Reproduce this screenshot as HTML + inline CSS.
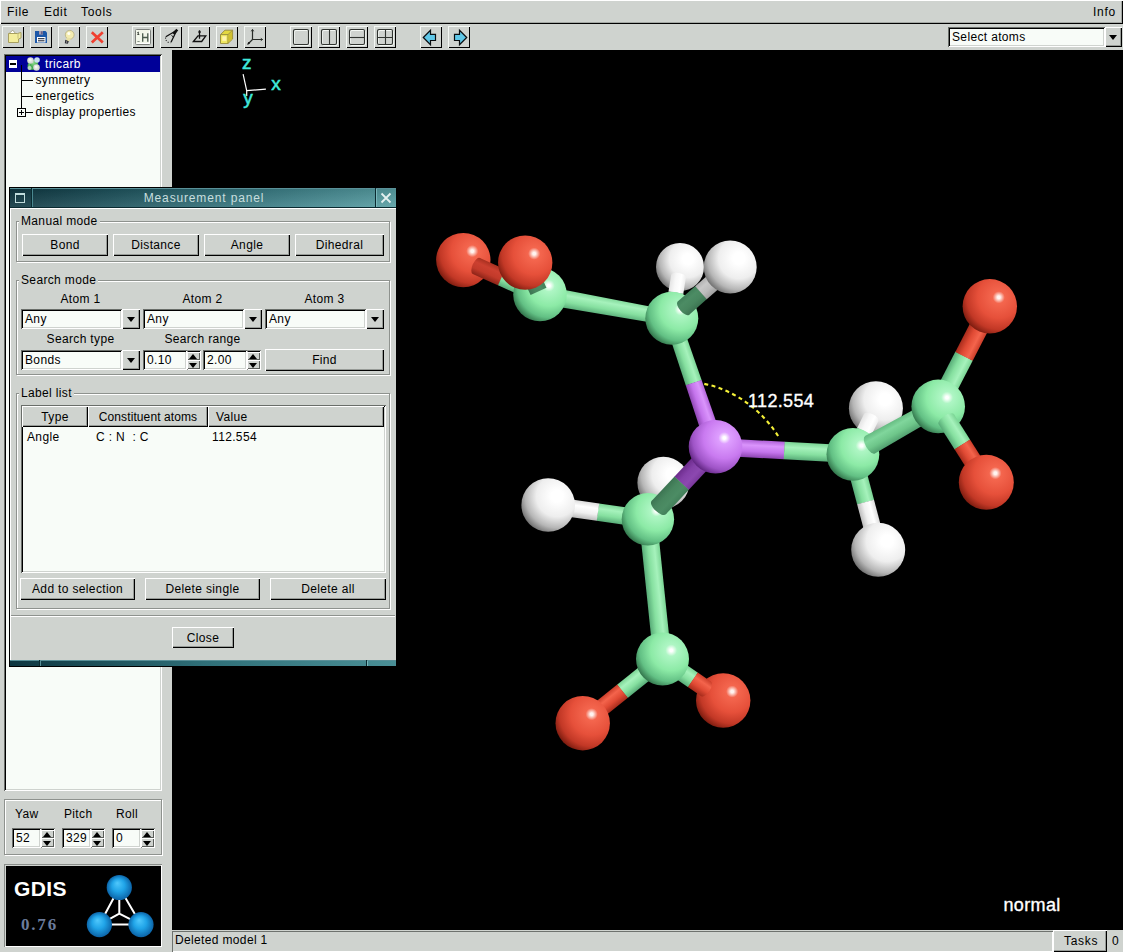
<!DOCTYPE html>
<html><head><meta charset="utf-8"><title>GDIS</title>
<style>
*{box-sizing:border-box;margin:0;padding:0}
html,body{width:1123px;height:952px;overflow:hidden}
body{background:#cfd3cf;font-family:"Liberation Sans",sans-serif;font-size:12px;color:#000;position:relative;line-height:14px;letter-spacing:0.35px}
.a{position:absolute}
.t{position:absolute;white-space:nowrap;line-height:14px}
.c{text-align:center}
.btn{position:absolute;background:#cfd3cf;box-shadow:inset 1px 1px 0 #fff,inset -1px -1px 0 #000,inset -2px -2px 0 #979b97;text-align:center;white-space:nowrap}
.tb{box-shadow:inset 1px 1px 0 #f4f8f4,inset -1px -1px 0 #000}
.sunk{position:absolute;background:#f8fcf8;box-shadow:inset 1px 1px 0 #6a6e6a,inset -1px -1px 0 #fff,inset 2px 2px 0 #000,inset -2px -2px 0 #cfd3cf;white-space:nowrap}
.frame{position:absolute;border:1px solid #8e928e;box-shadow:1px 1px 0 #fff,inset 1px 1px 0 #fff}
.fl{position:absolute;background:#cfd3cf;padding:0 2px;white-space:nowrap;line-height:14px}
.arr{position:absolute;width:0;height:0;border-left:4px solid transparent;border-right:4px solid transparent;border-top:5px solid #000}
.up{position:absolute;width:0;height:0;border-left:4.5px solid transparent;border-right:4.5px solid transparent;border-bottom:5px solid #000}
.dn{position:absolute;width:0;height:0;border-left:4.5px solid transparent;border-right:4.5px solid transparent;border-top:5px solid #000}
</style></head><body>

<!-- menu bar -->
<div class="a" id="menubar" style="left:0;top:0;width:1123px;height:24px;box-shadow:inset 1px 1px 0 #fff,inset -1px -1px 0 #000,inset -2px -2px 0 #a4a8a4"></div>
<div class="t" style="left:7px;top:5px;letter-spacing:0.7px">File</div>
<div class="t" style="left:44px;top:5px;letter-spacing:0.7px">Edit</div>
<div class="t" style="left:81px;top:5px;letter-spacing:0.7px">Tools</div>
<div class="t" style="left:1093px;top:5px;letter-spacing:0.7px">Info</div>

<!-- toolbar -->
<div class="btn tb" style="left:2px;top:26px;width:22px;height:22px"><svg class="a" style="left:0;top:0" width="22" height="22" viewBox="0 0 22 22"><path d="M6.5 8L10.7 4.2L14 8Z" fill="#fff" stroke="#9c9870" stroke-width="0.8"/><path d="M6.5 7.500H15.5L19 6.5V12L16.500 13V16.500H6.5Z" fill="#f4ee9c" stroke="#a8a060" stroke-width="1"/><path d="M16 7.500V12.500" stroke="#b8b070" stroke-width="0.8"/></svg></div>
<div class="btn tb" style="left:30px;top:26px;width:22px;height:22px"><svg class="a" style="left:0;top:0" width="22" height="22" viewBox="0 0 22 22"><path d="M5 5H15.500L17 6.500V17H5Z" fill="#1c58a8"/><rect x="9" y="5" width="4" height="3.600" fill="#a89cb0"/><rect x="11.300" y="5.300" width="1.200" height="2.800" fill="#4a4a78"/><rect x="7" y="11" width="8.500" height="5.500" fill="#fff"/><rect x="8" y="12.200" width="6.500" height="1" fill="#101828"/><rect x="8" y="14.300" width="6.500" height="1" fill="#101828"/></svg></div>
<div class="btn tb" style="left:58px;top:26px;width:22px;height:22px"><svg class="a" style="left:0;top:0" width="22" height="22" viewBox="0 0 22 22"><circle cx="11.700" cy="8.800" r="4.400" fill="#f4ecb0" stroke="#b0a878" stroke-width="0.700"/><path d="M8.800 11.500L7.800 14.500L10.500 15.500L13.500 12.500Z" fill="#e8e0a4"/><path d="M7.300 13.800L6.800 17.300L9.800 17.800L10.800 15.300Z" fill="#282830"/><circle cx="8.600" cy="16" r="0.800" fill="#a0a0a0"/><circle cx="10.800" cy="7.500" r="1.500" fill="#fffff4"/></svg></div>
<div class="btn tb" style="left:86px;top:26px;width:22px;height:22px"><svg class="a" style="left:0;top:0" width="22" height="22" viewBox="0 0 22 22"><path d="M5.800 6.300L16.800 16.500M16.800 6.300L5.800 16.500" stroke="#f04030" stroke-width="2.700" stroke-linecap="butt"/></svg></div>
<div class="btn tb" style="left:132px;top:26px;width:22px;height:22px"><svg class="a" style="left:0;top:0" width="22" height="22" viewBox="0 0 22 22"><rect x="3.500" y="3.500" width="15" height="15" rx="1" fill="#f2f6ea" stroke="#7c807c" stroke-width="1"/><path d="M17.500 5V17.500H5" stroke="#fff" stroke-width="1" fill="none"/><path d="M10.700 7.200V15.800M15.800 7.200V15.800M10.700 11.500H15.800" stroke="#48584c" stroke-width="1.300" fill="none"/><path d="M5.300 6.800L6.300 6V8.300M5.300 8.500H7.300" stroke="#303830" stroke-width="0.900" fill="none"/><path d="M5.500 15L6.500 16L7.500 15" stroke="#48584c" stroke-width="0.800" fill="none"/></svg></div>
<div class="btn tb" style="left:160px;top:26px;width:22px;height:22px"><svg class="a" style="left:0;top:0" width="22" height="22" viewBox="0 0 22 22"><path d="M16.800 4.300L5.800 10.800" stroke="#101010" stroke-width="1.300" fill="none"/><path d="M16.800 4.300L11 16.300" stroke="#101010" stroke-width="1.300" fill="none"/><path d="M17.300 3.600L13.300 7.800" stroke="#101010" stroke-width="2.600" fill="none"/><path d="M11.500 9.500L13.500 11" stroke="#101010" stroke-width="1" fill="none"/><path d="M5.600 11.500C5.200 14.500 7.500 16.600 10.600 16.800" stroke="#202020" stroke-width="1.100" stroke-dasharray="1.100 1.500" fill="none"/></svg></div>
<div class="btn tb" style="left:188px;top:26px;width:22px;height:22px"><svg class="a" style="left:0;top:0" width="22" height="22" viewBox="0 0 22 22"><path d="M5.400 15.500L10 9.800H17.800L13.700 15.500Z" fill="none" stroke="#101010" stroke-width="1.300"/><path d="M11.500 4.200V12.800M10.300 6H12.800" stroke="#101010" stroke-width="1.300" fill="none"/></svg></div>
<div class="btn tb" style="left:216px;top:26px;width:22px;height:22px"><svg class="a" style="left:0;top:0" width="22" height="22" viewBox="0 0 22 22"><path d="M4.500 8.600L9 4.200H16.600V13L12 17.400H4.500Z" fill="#e4d840" stroke="#9c9040" stroke-width="1"/><rect x="5" y="9" width="6.500" height="8" fill="#f0e860"/><rect x="6.300" y="10.300" width="4" height="4.500" fill="#fff4b0"/><path d="M4.500 8.600H12V17.400M12 8.600L16.600 4.200" fill="none" stroke="#9c9040" stroke-width="1"/><path d="M12.500 9L16.100 5.500V12.800L12.500 16.300Z" fill="#d0c030"/></svg></div>
<div class="btn tb" style="left:244px;top:26px;width:22px;height:22px"><svg class="a" style="left:0;top:0" width="22" height="22" viewBox="0 0 22 22"><path d="M8.500 3.500V13.500H18.500M8.500 13.500L3.500 18.500" stroke="#282c28" stroke-width="1.200" fill="none"/><path d="M7.300 5.300L8.500 3.500L9.700 5.300M16.800 12.300L18.500 13.500L16.800 14.700" stroke="#282c28" stroke-width="1" fill="none"/><circle cx="4.900" cy="17.100" r="1" fill="#181818"/></svg></div>
<div class="btn tb" style="left:290px;top:26px;width:22px;height:22px"><svg class="a" style="left:0;top:0" width="22" height="22" viewBox="0 0 22 22"><rect x="4.5" y="4.5" width="15" height="15" rx="1.5" fill="none" stroke="#f4f8f4" stroke-width="1"/><rect x="3.5" y="3.5" width="15" height="15" rx="1.5" fill="none" stroke="#303430" stroke-width="1.1"/></svg></div>
<div class="btn tb" style="left:318px;top:26px;width:22px;height:22px"><svg class="a" style="left:0;top:0" width="22" height="22" viewBox="0 0 22 22"><rect x="4.5" y="4.5" width="15" height="15" rx="1.5" fill="none" stroke="#f4f8f4" stroke-width="1"/><rect x="3.5" y="3.5" width="15" height="15" rx="1.5" fill="none" stroke="#303430" stroke-width="1.1"/><path d="M11.5 3.5V18.5" stroke="#303430" stroke-width="1.1"/></svg></div>
<div class="btn tb" style="left:346px;top:26px;width:22px;height:22px"><svg class="a" style="left:0;top:0" width="22" height="22" viewBox="0 0 22 22"><rect x="4.5" y="4.5" width="15" height="15" rx="1.5" fill="none" stroke="#f4f8f4" stroke-width="1"/><rect x="3.5" y="3.5" width="15" height="15" rx="1.5" fill="none" stroke="#303430" stroke-width="1.1"/><path d="M3.5 11.5H18.5" stroke="#303430" stroke-width="1.1"/></svg></div>
<div class="btn tb" style="left:374px;top:26px;width:22px;height:22px"><svg class="a" style="left:0;top:0" width="22" height="22" viewBox="0 0 22 22"><rect x="4.5" y="4.5" width="15" height="15" rx="1.5" fill="none" stroke="#f4f8f4" stroke-width="1"/><rect x="3.5" y="3.5" width="15" height="15" rx="1.5" fill="none" stroke="#303430" stroke-width="1.1"/><path d="M11.5 3.5V18.5M3.5 11.5H18.5" stroke="#303430" stroke-width="1.1"/></svg></div>
<div class="btn tb" style="left:420px;top:26px;width:22px;height:22px"><svg class="a" style="left:0;top:0" width="22" height="22" viewBox="0 0 22 22"><path d="M3.300 11.500L10.500 4.300V8.300H15.500V14.500H10.500V18.700Z" fill="#60c8e8" stroke="#080c10" stroke-width="1.200"/></svg></div>
<div class="btn tb" style="left:448px;top:26px;width:22px;height:22px"><svg class="a" style="left:0;top:0" width="22" height="22" viewBox="0 0 22 22"><path d="M18.700 11.500L11.500 4.300V8.300H6.500V14.500H11.500V18.700Z" fill="#60c8e8" stroke="#080c10" stroke-width="1.200"/></svg></div>


<!-- select combo -->
<div class="sunk" style="left:948px;top:27px;width:157px;height:20px"><div class="t" style="left:4px;top:3px">Select atoms</div></div>
<div class="btn" style="left:1105px;top:27px;width:17px;height:20px"><div class="arr" style="left:4px;top:8px"></div></div>

<!-- tree -->
<div class="sunk" id="tree" style="left:4px;top:54px;width:158px;height:737px"></div>
<div class="a" style="left:6px;top:56px;width:154px;height:16px;background:#000098"></div>
<div class="a" style="left:9px;top:60px;width:8px;height:8px;background:#fff"><div class="a" style="left:1px;top:3px;width:6px;height:2px;background:#000"></div></div>
<svg class="a" style="left:25px;top:56px" width="17" height="16" viewBox="0 0 17 16"><defs><radialGradient id="tg" cx="0.5" cy="0.5" r="0.5" fx="0.4" fy="0.35"><stop offset="0" stop-color="#fff"/><stop offset="1" stop-color="#c8d0c8"/></radialGradient><radialGradient id="tg2" cx="0.5" cy="0.5" r="0.5" fx="0.4" fy="0.35"><stop offset="0" stop-color="#90e090"/><stop offset="1" stop-color="#38a048"/></radialGradient></defs><circle cx="6.5" cy="10" r="4" fill="url(#tg2)"/><circle cx="9" cy="8" r="4.2" fill="url(#tg2)"/><circle cx="5.5" cy="4.500" r="3.300" fill="url(#tg)"/><circle cx="12" cy="4" r="2.800" fill="#c8e0f0"/><circle cx="11.500" cy="11.500" r="3.300" fill="url(#tg)"/><circle cx="4.500" cy="12" r="2" fill="#b8d8c0"/></svg>
<div class="t" style="left:45px;top:57px;color:#fff">tricarb</div>
<div class="a" style="left:21px;top:65px;width:1px;height:48px;background:#000"></div>
<div class="a" style="left:21px;top:80px;width:12px;height:1px;background:#000"></div>
<div class="a" style="left:21px;top:96px;width:12px;height:1px;background:#000"></div>
<div class="a" style="left:21px;top:112px;width:12px;height:1px;background:#000"></div>
<div class="t" style="left:35.500px;top:73px">symmetry</div>
<div class="t" style="left:35.500px;top:89px">energetics</div>
<div class="t" style="left:35.500px;top:105px">display properties</div>
<div class="a" style="left:17px;top:108px;width:9px;height:9px;background:#f8fcf8;border:1px solid #000"><div class="a" style="left:1px;top:3px;width:5px;height:1px;background:#000"></div><div class="a" style="left:3px;top:1px;width:1px;height:5px;background:#000"></div></div>


<!-- yaw pitch roll -->
<div class="frame" style="left:4px;top:799px;width:158px;height:56px"></div>
<div class="t" style="left:15px;top:807px">Yaw</div>
<div class="t" style="left:64px;top:807px">Pitch</div>
<div class="t" style="left:116px;top:807px">Roll</div>
<div class="sunk" style="left:12px;top:828px;width:29px;height:20px"><div class="t" style="left:4px;top:3px">52</div></div><div class="a" style="left:41px;top:828px;width:14px;height:20px;box-shadow:inset 1px 1px 0 #8a8e8a,inset -1px -1px 0 #fff,inset 0 2px 0 #000"></div><div class="btn" style="left:41px;top:830px;width:13px;height:8px;box-shadow:inset 1px 1px 0 #fff,inset -1px -1px 0 #5a5e5a"><div class="up" style="left:2px;top:1.500px"></div></div><div class="btn" style="left:41px;top:838px;width:13px;height:9px;box-shadow:inset 1px 1px 0 #fff,inset -1px -1px 0 #5a5e5a"><div class="dn" style="left:2px;top:2.500px"></div></div><div class="sunk" style="left:62px;top:828px;width:29px;height:20px"><div class="t" style="left:4px;top:3px">329</div></div><div class="a" style="left:91px;top:828px;width:14px;height:20px;box-shadow:inset 1px 1px 0 #8a8e8a,inset -1px -1px 0 #fff,inset 0 2px 0 #000"></div><div class="btn" style="left:91px;top:830px;width:13px;height:8px;box-shadow:inset 1px 1px 0 #fff,inset -1px -1px 0 #5a5e5a"><div class="up" style="left:2px;top:1.500px"></div></div><div class="btn" style="left:91px;top:838px;width:13px;height:9px;box-shadow:inset 1px 1px 0 #fff,inset -1px -1px 0 #5a5e5a"><div class="dn" style="left:2px;top:2.500px"></div></div><div class="sunk" style="left:112px;top:828px;width:29px;height:20px"><div class="t" style="left:4px;top:3px">0</div></div><div class="a" style="left:141px;top:828px;width:14px;height:20px;box-shadow:inset 1px 1px 0 #8a8e8a,inset -1px -1px 0 #fff,inset 0 2px 0 #000"></div><div class="btn" style="left:141px;top:830px;width:13px;height:8px;box-shadow:inset 1px 1px 0 #fff,inset -1px -1px 0 #5a5e5a"><div class="up" style="left:2px;top:1.500px"></div></div><div class="btn" style="left:141px;top:838px;width:13px;height:9px;box-shadow:inset 1px 1px 0 #fff,inset -1px -1px 0 #5a5e5a"><div class="dn" style="left:2px;top:2.500px"></div></div>

<!-- logo -->
<div class="a" style="left:4px;top:864px;width:158px;height:83px;box-shadow:inset 1px 1px 0 #8a8e8a,inset -1px -1px 0 #fff"></div>
<svg class="a" style="left:6px;top:866px" width="155" height="80" viewBox="6 866 155 80"><rect x="6" y="866" width="155" height="80" fill="#000"/>
<defs><radialGradient id="lb" cx="0.5" cy="0.5" r="0.5" fx="0.42" fy="0.32"><stop offset="0" stop-color="#50c8fc"/><stop offset="0.5" stop-color="#20a4e8"/><stop offset="1" stop-color="#0c64a8"/></radialGradient></defs>
<g stroke="#fff" stroke-width="2" fill="none"><path d="M119.3 887.5L99.4 924.6H141Z"/><path d="M119.3 913.7L119.3 887.5M119.3 913.7L99.4 924.6M119.3 913.7L141 924.6"/></g>
<circle cx="119.3" cy="887.5" r="12.6" fill="url(#lb)"/><circle cx="99.4" cy="924.6" r="12.6" fill="url(#lb)"/><circle cx="141" cy="924.6" r="12.6" fill="url(#lb)"/>
<text x="14" y="895.5" font-family="Liberation Sans, sans-serif" font-weight="bold" font-size="21" fill="#fff">GDIS</text>
<text x="21" y="930" font-family="Liberation Serif, serif" font-weight="bold" font-size="17" letter-spacing="1.800" fill="#6c7c9c">0.76</text>
</svg>

<!-- GL -->
<svg id="gl" width="951" height="880" viewBox="172 50 951 880" style="position:absolute;left:172px;top:50px;background:#000">
<defs><radialGradient id="bC" cx="0.665" cy="0.335" r="0.74"><stop offset="0" stop-color="#ffffff"/><stop offset="0.035" stop-color="#ffffff"/><stop offset="0.15" stop-color="#aef6c4"/><stop offset="0.52" stop-color="#8ceaa6"/><stop offset="0.8" stop-color="#62c084"/><stop offset="1" stop-color="#2f7048"/></radialGradient><radialGradient id="bO" cx="0.665" cy="0.335" r="0.74"><stop offset="0" stop-color="#fff4f0"/><stop offset="0.035" stop-color="#fff4f0"/><stop offset="0.15" stop-color="#f4664e"/><stop offset="0.52" stop-color="#e6503a"/><stop offset="0.8" stop-color="#c23826"/><stop offset="1" stop-color="#781a0e"/></radialGradient><radialGradient id="bH" cx="0.665" cy="0.335" r="0.74"><stop offset="0" stop-color="#ffffff"/><stop offset="0.035" stop-color="#ffffff"/><stop offset="0.15" stop-color="#ffffff"/><stop offset="0.52" stop-color="#eeeeee"/><stop offset="0.8" stop-color="#b6b6b6"/><stop offset="1" stop-color="#6c6c6c"/></radialGradient><radialGradient id="bN" cx="0.665" cy="0.335" r="0.74"><stop offset="0" stop-color="#ffffff"/><stop offset="0.035" stop-color="#ffffff"/><stop offset="0.15" stop-color="#de9eff"/><stop offset="0.52" stop-color="#c97af0"/><stop offset="0.8" stop-color="#9e54c6"/><stop offset="1" stop-color="#5c227c"/></radialGradient><linearGradient id="sCP" x1="0" y1="0" x2="0" y2="1"><stop offset="0" stop-color="#58ac78"/><stop offset="0.35" stop-color="#86e0a0"/><stop offset="0.7" stop-color="#a6f2bc"/><stop offset="1" stop-color="#7ad494"/></linearGradient><linearGradient id="sCM" x1="0" y1="1" x2="0" y2="0"><stop offset="0" stop-color="#58ac78"/><stop offset="0.35" stop-color="#86e0a0"/><stop offset="0.7" stop-color="#a6f2bc"/><stop offset="1" stop-color="#7ad494"/></linearGradient><linearGradient id="sCmP" x1="0" y1="0" x2="0" y2="1"><stop offset="0" stop-color="#509e6e"/><stop offset="0.35" stop-color="#6ec68a"/><stop offset="0.7" stop-color="#80d69c"/><stop offset="1" stop-color="#64ba80"/></linearGradient><linearGradient id="sCmM" x1="0" y1="1" x2="0" y2="0"><stop offset="0" stop-color="#509e6e"/><stop offset="0.35" stop-color="#6ec68a"/><stop offset="0.7" stop-color="#80d69c"/><stop offset="1" stop-color="#64ba80"/></linearGradient><linearGradient id="sCdP" x1="0" y1="0" x2="0" y2="1"><stop offset="0" stop-color="#3c7452"/><stop offset="0.35" stop-color="#48865f"/><stop offset="0.7" stop-color="#4c8c64"/><stop offset="1" stop-color="#42805a"/></linearGradient><linearGradient id="sCdM" x1="0" y1="1" x2="0" y2="0"><stop offset="0" stop-color="#3c7452"/><stop offset="0.35" stop-color="#48865f"/><stop offset="0.7" stop-color="#4c8c64"/><stop offset="1" stop-color="#42805a"/></linearGradient><linearGradient id="sOP" x1="0" y1="0" x2="0" y2="1"><stop offset="0" stop-color="#a82c1c"/><stop offset="0.35" stop-color="#e04a34"/><stop offset="0.7" stop-color="#f4644c"/><stop offset="1" stop-color="#cc3e2a"/></linearGradient><linearGradient id="sOM" x1="0" y1="1" x2="0" y2="0"><stop offset="0" stop-color="#a82c1c"/><stop offset="0.35" stop-color="#e04a34"/><stop offset="0.7" stop-color="#f4644c"/><stop offset="1" stop-color="#cc3e2a"/></linearGradient><linearGradient id="sOdP" x1="0" y1="0" x2="0" y2="1"><stop offset="0" stop-color="#8c2418"/><stop offset="0.35" stop-color="#c23a2a"/><stop offset="0.7" stop-color="#cc4030"/><stop offset="1" stop-color="#a83020"/></linearGradient><linearGradient id="sOdM" x1="0" y1="1" x2="0" y2="0"><stop offset="0" stop-color="#8c2418"/><stop offset="0.35" stop-color="#c23a2a"/><stop offset="0.7" stop-color="#cc4030"/><stop offset="1" stop-color="#a83020"/></linearGradient><linearGradient id="sHP" x1="0" y1="0" x2="0" y2="1"><stop offset="0" stop-color="#bcbcbc"/><stop offset="0.35" stop-color="#f0f0f0"/><stop offset="0.7" stop-color="#ffffff"/><stop offset="1" stop-color="#dcdcdc"/></linearGradient><linearGradient id="sHM" x1="0" y1="1" x2="0" y2="0"><stop offset="0" stop-color="#bcbcbc"/><stop offset="0.35" stop-color="#f0f0f0"/><stop offset="0.7" stop-color="#ffffff"/><stop offset="1" stop-color="#dcdcdc"/></linearGradient><linearGradient id="sHwP" x1="0" y1="0" x2="0" y2="1"><stop offset="0" stop-color="#e4e4e4"/><stop offset="0.35" stop-color="#f8f8f8"/><stop offset="0.7" stop-color="#ffffff"/><stop offset="1" stop-color="#efefef"/></linearGradient><linearGradient id="sHwM" x1="0" y1="1" x2="0" y2="0"><stop offset="0" stop-color="#e4e4e4"/><stop offset="0.35" stop-color="#f8f8f8"/><stop offset="0.7" stop-color="#ffffff"/><stop offset="1" stop-color="#efefef"/></linearGradient><linearGradient id="sHdP" x1="0" y1="0" x2="0" y2="1"><stop offset="0" stop-color="#a0a0a0"/><stop offset="0.35" stop-color="#bcbcbc"/><stop offset="0.7" stop-color="#c8c8c8"/><stop offset="1" stop-color="#b0b0b0"/></linearGradient><linearGradient id="sHdM" x1="0" y1="1" x2="0" y2="0"><stop offset="0" stop-color="#a0a0a0"/><stop offset="0.35" stop-color="#bcbcbc"/><stop offset="0.7" stop-color="#c8c8c8"/><stop offset="1" stop-color="#b0b0b0"/></linearGradient><linearGradient id="sNP" x1="0" y1="0" x2="0" y2="1"><stop offset="0" stop-color="#8c44b0"/><stop offset="0.35" stop-color="#c474ec"/><stop offset="0.7" stop-color="#da94fc"/><stop offset="1" stop-color="#b062d8"/></linearGradient><linearGradient id="sNM" x1="0" y1="1" x2="0" y2="0"><stop offset="0" stop-color="#8c44b0"/><stop offset="0.35" stop-color="#c474ec"/><stop offset="0.7" stop-color="#da94fc"/><stop offset="1" stop-color="#b062d8"/></linearGradient><linearGradient id="sNdP" x1="0" y1="0" x2="0" y2="1"><stop offset="0" stop-color="#6c2c8c"/><stop offset="0.35" stop-color="#8440a8"/><stop offset="0.7" stop-color="#8c48b0"/><stop offset="1" stop-color="#7a389c"/></linearGradient><linearGradient id="sNdM" x1="0" y1="1" x2="0" y2="0"><stop offset="0" stop-color="#6c2c8c"/><stop offset="0.35" stop-color="#8440a8"/><stop offset="0.7" stop-color="#8c48b0"/><stop offset="1" stop-color="#7a389c"/></linearGradient></defs>
<g stroke="#fff" stroke-width="1.2" fill="none"><path d="M246.7 90.6L243.1 74.2M246.7 90.6L265.9 89.2M246.7 90.6L246.7 96"/></g>
<g font-family="Liberation Sans, sans-serif" font-size="19" fill="#40e8dc" stroke="#40e8dc" stroke-width="0.500"><text x="242" y="69">z</text><text x="271.3" y="89.6">x</text><text x="243.3" y="104">y</text></g>
<circle cx="463.3" cy="260.1" r="27.2" fill="url(#bO)"/>
<g transform="translate(463.3 260.1) rotate(24.16)"><ellipse cx="14.3" cy="0" rx="3.9" ry="8.75" fill="url(#sOdM)"/><path d="M14.3 -8.75L42.3 -8.75L42.3 8.75L14.3 8.75Z" fill="url(#sOdM)"/><path d="M42.0 -8.75L84.1 -8.75L84.1 8.75L42.0 8.75Z" fill="url(#sCM)"/></g>
<g transform="translate(540.0 294.5) rotate(10.24)"><path d="M0.0 -9.25L133.9 -7.50L133.9 7.50L0.0 9.25Z" fill="url(#sCM)"/></g>
<circle cx="540.0" cy="294.5" r="26.8" fill="url(#bC)"/>
<g transform="translate(540.0 294.5) rotate(-114.89)"><path d="M3.5 -8.75L17.9 -8.75L17.9 8.75L3.5 8.75Z" fill="url(#sCdP)"/><path d="M17.6 -8.75L21.1 -8.75L21.1 8.75L17.6 8.75Z" fill="url(#sOP)"/></g>
<circle cx="525.2" cy="262.6" r="27.2" fill="url(#bO)"/>
<circle cx="680.0" cy="267.0" r="24.0" fill="url(#bH)"/>
<g transform="translate(671.8 318.3) rotate(-80.92)"><path d="M0.0 -7.50L26.3 -7.50L26.3 7.50L0.0 7.50Z" fill="url(#sCP)"/><path d="M26.0 -7.50L42.6 -7.50L42.6 7.50L26.0 7.50Z" fill="url(#sHwP)"/><ellipse cx="42.6" cy="0" rx="3.3" ry="7.50" fill="url(#sHwP)"/></g>
<g transform="translate(671.8 318.3) rotate(71.22)"><path d="M0.0 -7.75L68.2 -8.38L68.2 8.38L0.0 7.75Z" fill="url(#sCM)"/><path d="M67.9 -8.38L135.7 -9.00L135.7 9.00L67.9 8.38Z" fill="url(#sNM)"/></g>
<circle cx="671.8" cy="318.3" r="26.5" fill="url(#bC)"/>
<g transform="translate(671.8 318.3) rotate(-41.24)"><ellipse cx="15.5" cy="0" rx="3.9" ry="8.75" fill="url(#sCdM)"/><path d="M15.5 -8.75L39.1 -8.75L39.1 8.75L15.5 8.75Z" fill="url(#sCdM)"/><path d="M38.8 -8.75L77.7 -8.75L77.7 8.75L38.8 8.75Z" fill="url(#sHdM)"/></g>
<circle cx="730.2" cy="267.1" r="26.5" fill="url(#bH)"/>
<circle cx="663.4" cy="482.7" r="26.0" fill="url(#bH)"/>
<g transform="translate(647.9 519.3) rotate(-171.84)"><path d="M0.0 -8.75L50.7 -8.75L50.7 8.75L0.0 8.75Z" fill="url(#sCP)"/><path d="M50.4 -8.75L100.7 -8.75L100.7 8.75L50.4 8.75Z" fill="url(#sHP)"/></g>
<g transform="translate(647.9 519.3) rotate(84.04)"><path d="M0.0 -9.00L140.6 -9.00L140.6 9.00L0.0 9.00Z" fill="url(#sCM)"/></g>
<circle cx="647.9" cy="519.3" r="26.2" fill="url(#bC)"/>
<circle cx="548.2" cy="505.0" r="26.8" fill="url(#bH)"/>
<g transform="translate(715.5 446.8) rotate(133.00)"><path d="M0.0 -9.75L49.9 -9.75L49.9 9.75L0.0 9.75Z" fill="url(#sNdM)"/><path d="M49.6 -9.75L83.3 -9.75L83.3 9.75L49.6 9.75Z" fill="url(#sCdM)"/><ellipse cx="83.3" cy="0" rx="4.3" ry="9.75" fill="url(#sCdM)"/></g>
<circle cx="723.2" cy="700.5" r="27.2" fill="url(#bO)"/>
<g transform="translate(662.5 659.1) rotate(34.30)"><path d="M0.0 -8.75L37.0 -8.75L37.0 8.75L0.0 8.75Z" fill="url(#sCM)"/><path d="M36.7 -8.75L52.9 -8.75L52.9 8.75L36.7 8.75Z" fill="url(#sOM)"/><ellipse cx="52.9" cy="0" rx="3.9" ry="8.75" fill="url(#sOM)"/></g>
<g transform="translate(662.5 659.1) rotate(141.23)"><path d="M0.0 -8.50L51.5 -8.50L51.5 8.50L0.0 8.50Z" fill="url(#sCP)"/><path d="M51.2 -8.50L102.4 -8.50L102.4 8.50L51.2 8.50Z" fill="url(#sOP)"/></g>
<circle cx="662.5" cy="659.1" r="26.5" fill="url(#bC)"/>
<circle cx="582.7" cy="723.2" r="27.2" fill="url(#bO)"/>
<g transform="translate(715.5 446.8) rotate(3.12)"><path d="M0.0 -8.75L69.1 -8.75L69.1 8.75L0.0 8.75Z" fill="url(#sNM)"/><path d="M68.8 -8.75L137.6 -8.75L137.6 8.75L68.8 8.75Z" fill="url(#sCM)"/></g>
<circle cx="715.5" cy="446.8" r="26.8" fill="url(#bN)"/>
<circle cx="875.9" cy="408.2" r="27.0" fill="url(#bH)"/>
<g transform="translate(852.9 454.3) rotate(-63.48)"><path d="M0.0 -8.00L26.1 -8.00L26.1 8.00L0.0 8.00Z" fill="url(#sCP)"/><path d="M25.8 -8.00L41.2 -8.00L41.2 8.00L25.8 8.00Z" fill="url(#sHwP)"/><ellipse cx="41.2" cy="0" rx="3.5" ry="8.00" fill="url(#sHwP)"/></g>
<g transform="translate(852.9 454.3) rotate(75.16)"><path d="M0.0 -8.75L49.7 -8.75L49.7 8.75L0.0 8.75Z" fill="url(#sCM)"/><path d="M49.4 -8.75L98.8 -8.75L98.8 8.75L49.4 8.75Z" fill="url(#sHM)"/></g>
<circle cx="852.9" cy="454.3" r="26.4" fill="url(#bC)"/>
<circle cx="878.2" cy="549.8" r="27.0" fill="url(#bH)"/>
<g transform="translate(852.9 454.3) rotate(-29.32)"><ellipse cx="19.6" cy="0" rx="4.4" ry="9.95" fill="url(#sCmM)"/><path d="M19.6 -9.95L97.8 -8.75L97.8 8.75L19.6 9.95Z" fill="url(#sCmM)"/></g>
<g transform="translate(938.2 406.4) rotate(-62.73)"><path d="M0.0 -9.75L56.6 -9.75L56.6 9.75L0.0 9.75Z" fill="url(#sCP)"/><path d="M56.3 -9.75L112.6 -9.75L112.6 9.75L56.3 9.75Z" fill="url(#sOP)"/></g>
<circle cx="938.2" cy="406.4" r="26.8" fill="url(#bC)"/>
<g transform="translate(938.2 406.4) rotate(57.64)"><ellipse cx="15.3" cy="0" rx="4.0" ry="9.15" fill="url(#sCM)"/><path d="M15.3 -9.15L45.2 -9.15L45.2 9.15L15.3 9.15Z" fill="url(#sCM)"/><path d="M44.9 -9.15L89.9 -9.15L89.9 9.15L44.9 9.15Z" fill="url(#sOM)"/></g>
<circle cx="989.8" cy="306.3" r="27.2" fill="url(#bO)"/>
<circle cx="986.3" cy="482.3" r="27.5" fill="url(#bO)"/>

<path d="M704.3 383.9C735.5 390.1 763.3 411.2 779.5 438.3" fill="none" stroke="#f4f038" stroke-width="2.1" stroke-dasharray="4 3.4"/>
<g font-family="Liberation Sans, sans-serif" font-size="18" fill="#fff" stroke="#fff" stroke-width="0.350"><text x="748" y="407">112.554</text><text x="1003.500" y="911">normal</text></g>
</svg>

<!-- status bar -->
<div class="a" style="left:172px;top:931px;width:881px;height:21px;box-shadow:inset 1px 1px 0 #6e726e,inset -1px -1px 0 #fff"><div class="t" style="left:3px;top:2px">Deleted model 1</div></div>
<div class="btn" style="left:1053px;top:930px;width:54px;height:22px"><div class="t" style="left:11px;top:4px;letter-spacing:0.7px">Tasks</div></div>
<div class="t" style="left:1112px;top:934px">0</div>

<!-- dialog -->
<div class="a" style="left:9px;top:187px;width:388px;height:480px;background:#000"></div><div class="a" id="dlgbody" style="left:10px;top:208px;width:386px;height:452px;background:#cfd3cf;box-shadow:inset 1px 1px 0 #fff"></div><div class="a" style="left:10px;top:188px;width:386px;height:20px;background:linear-gradient(180deg,rgba(0,0,0,.12),rgba(255,255,255,.10)),linear-gradient(100deg,#0e3640 0%,#1c505a 25%,#2f6f78 55%,#4a8f96 85%,#58a0a4 100%);box-shadow:inset 0 1px 0 #5a9098,inset 0 -1px 0 #0a2a30"></div><div class="a" style="left:31px;top:188px;width:1px;height:20px;background:#0a2a30"></div><div class="a" style="left:32px;top:189px;width:1px;height:18px;background:#4a8890"></div><div class="a" style="left:375px;top:188px;width:1px;height:20px;background:#0a2a30"></div><div class="a" style="left:376px;top:189px;width:1px;height:18px;background:#7ab8bc"></div><div class="a" style="left:15px;top:193px;width:10px;height:10px;border:1px solid #c0dcdc;border-top-width:2px"></div><svg class="a" style="left:377px;top:189px" width="18" height="18" viewBox="0 0 18 18"><path d="M4.5 4.5L13.5 13.5M13.5 4.5L4.5 13.5" stroke="#e4f0f0" stroke-width="1.8"/></svg><div class="t c" style="left:33px;top:191px;width:342px;color:#c8dede;letter-spacing:0.85px">Measurement panel</div><div class="a" style="left:10px;top:660px;width:386px;height:6px;background:linear-gradient(90deg,#0e3640,#2f6f78 50%,#4a8f96);box-shadow:inset 0 1px 0 #5a9098"></div><div class="a" style="left:39px;top:660px;width:1px;height:6px;background:#0a2a30"></div><div class="a" style="left:40px;top:661px;width:1px;height:5px;background:#5a9098"></div><div class="a" style="left:366px;top:660px;width:1px;height:6px;background:#0a2a30"></div><div class="a" style="left:367px;top:661px;width:1px;height:5px;background:#7ab8bc"></div><div class="frame" style="left:16px;top:221px;width:374px;height:41px"></div><div class="fl" style="left:19px;top:214px">Manual mode</div><div class="btn" style="left:22px;top:234px;width:86px;height:22px;line-height:22px">Bond</div><div class="btn" style="left:113px;top:234px;width:86px;height:22px;line-height:22px">Distance</div><div class="btn" style="left:204px;top:234px;width:86px;height:22px;line-height:22px">Angle</div><div class="btn" style="left:295px;top:234px;width:89px;height:22px;line-height:22px">Dihedral</div><div class="frame" style="left:16px;top:280px;width:374px;height:95px"></div><div class="fl" style="left:19px;top:273px">Search mode</div><div class="t c" style="left:21px;top:292px;width:119px">Atom 1</div><div class="t c" style="left:143px;top:292px;width:119px">Atom 2</div><div class="t c" style="left:265px;top:292px;width:119px">Atom 3</div><div class="sunk" style="left:21px;top:309px;width:101px;height:20px"><div class="t" style="left:4px;top:3px">Any</div></div><div class="btn" style="left:122px;top:309px;width:18px;height:20px"><div class="arr" style="left:5px;top:8px"></div></div><div class="sunk" style="left:143px;top:309px;width:101px;height:20px"><div class="t" style="left:4px;top:3px">Any</div></div><div class="btn" style="left:244px;top:309px;width:18px;height:20px"><div class="arr" style="left:5px;top:8px"></div></div><div class="sunk" style="left:265px;top:309px;width:101px;height:20px"><div class="t" style="left:4px;top:3px">Any</div></div><div class="btn" style="left:366px;top:309px;width:18px;height:20px"><div class="arr" style="left:5px;top:8px"></div></div><div class="t c" style="left:21px;top:332px;width:119px">Search type</div><div class="t c" style="left:143px;top:332px;width:119px">Search range</div><div class="sunk" style="left:21px;top:350px;width:101px;height:20px"><div class="t" style="left:4px;top:3px">Bonds</div></div><div class="btn" style="left:122px;top:350px;width:18px;height:20px"><div class="arr" style="left:5px;top:8px"></div></div><div class="sunk" style="left:143px;top:350px;width:44px;height:20px"><div class="t" style="left:4px;top:3px">0.10</div></div><div class="a" style="left:187px;top:350px;width:14px;height:20px;box-shadow:inset 1px 1px 0 #8a8e8a,inset -1px -1px 0 #fff,inset 0 2px 0 #000"></div><div class="btn" style="left:187px;top:352px;width:13px;height:8px;box-shadow:inset 1px 1px 0 #fff,inset -1px -1px 0 #5a5e5a"><div class="up" style="left:2px;top:1.500px"></div></div><div class="btn" style="left:187px;top:360px;width:13px;height:9px;box-shadow:inset 1px 1px 0 #fff,inset -1px -1px 0 #5a5e5a"><div class="dn" style="left:2px;top:2.500px"></div></div><div class="sunk" style="left:203px;top:350px;width:44px;height:20px"><div class="t" style="left:4px;top:3px">2.00</div></div><div class="a" style="left:247px;top:350px;width:14px;height:20px;box-shadow:inset 1px 1px 0 #8a8e8a,inset -1px -1px 0 #fff,inset 0 2px 0 #000"></div><div class="btn" style="left:247px;top:352px;width:13px;height:8px;box-shadow:inset 1px 1px 0 #fff,inset -1px -1px 0 #5a5e5a"><div class="up" style="left:2px;top:1.500px"></div></div><div class="btn" style="left:247px;top:360px;width:13px;height:9px;box-shadow:inset 1px 1px 0 #fff,inset -1px -1px 0 #5a5e5a"><div class="dn" style="left:2px;top:2.500px"></div></div><div class="btn" style="left:265px;top:349px;width:119px;height:22px;line-height:22px">Find</div><div class="frame" style="left:16px;top:393px;width:374px;height:216px"></div><div class="fl" style="left:19px;top:386px">Label list</div><div class="sunk" style="left:21px;top:405px;width:365px;height:168px"></div><div class="btn" style="left:22px;top:406px;width:66px;height:21px;line-height:23px">Type</div><div class="btn" style="left:88px;top:406px;width:120px;height:21px;line-height:23px;letter-spacing:0.1px">Constituent atoms</div><div class="btn" style="left:208px;top:406px;width:176px;height:21px;line-height:23px;text-align:left;padding-left:8px">Value</div><div class="t" style="left:27px;top:430px">Angle</div><div class="t" style="left:96px;top:430px;white-space:pre">C : N  : C</div><div class="t" style="left:212px;top:430px">112.554</div><div class="btn" style="left:20px;top:578px;width:115px;height:22px;line-height:22px">Add to selection</div><div class="btn" style="left:145px;top:578px;width:115px;height:22px;line-height:22px">Delete single</div><div class="btn" style="left:270px;top:578px;width:116px;height:22px;line-height:22px">Delete all</div><div class="a" style="left:11px;top:615px;width:384px;height:1px;background:#8e928e"></div><div class="a" style="left:11px;top:616px;width:384px;height:1px;background:#fff"></div><div class="btn" style="left:172px;top:627px;width:62px;height:21px;line-height:22.500px">Close</div>
</body></html>
